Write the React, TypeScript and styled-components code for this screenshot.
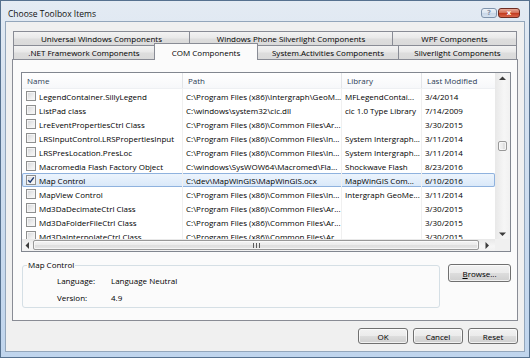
import styled, { createGlobalStyle } from "styled-components";

const GlobalStyle = createGlobalStyle`
  html, body {
    margin: 0;
    padding: 0;
    background: #ffffff;
  }
  body {
    font-family: "Open Sans", "Segoe UI", sans-serif;
    font-size: 8px;
    color: #000;
  }
  * {
    box-sizing: border-box;
  }
`;

const Window = styled.div`
  width: 530px;
  height: 358px;
  display: flex;
  flex-direction: column;
  border: 1px solid #56718f;
  background: linear-gradient(to bottom, #e4ebf3 0%, #d6e2f0 25%, #c0d5ed 100%);
`;

const TitleBar = styled.div`
  height: 20px;
  display: flex;
  align-items: flex-start;
  padding: 6px 9px 0 7px;
`;

const Title = styled.div`
  flex: 1;
  font-size: 8.5px;
  line-height: 13px;
  color: #111;
`;

const CaptionGroup = styled.div`
  display: flex;
  gap: 1px;
  margin-top: 1px;
`;

const CaptionButton = styled.div<{ $close?: boolean }>`
  width: ${(p) => (p.$close ? 22 : 16)}px;
  height: 10px;
  border-radius: 3px;
  display: flex;
  align-items: center;
  justify-content: center;
  font-family: "DejaVu Sans", sans-serif;
  font-weight: bold;
  font-size: 7px;
  line-height: 1;
  border: 1px solid ${(p) => (p.$close ? "#6e2d22" : "#7f93ab")};
  color: ${(p) => (p.$close ? "#ffffff" : "#8795a8")};
  background: ${(p) =>
    p.$close
      ? "linear-gradient(#e7a896 0%, #d36d55 48%, #c2391d 52%, #d9654a 100%)"
      : "linear-gradient(#eef3f9 0%, #dce6f1 48%, #c9d7e8 52%, #d6e2ef 100%)"};
`;

const Client = styled.div`
  flex: 1;
  margin: 0 4px 5px 4px;
  border: 1px solid #93a6bb;
  background: #f0f0f0;
  padding: 9px 6px 6px 6px;
  display: flex;
  flex-direction: column;
`;

const TabStrip = styled.div`
  display: flex;
  flex-direction: column;
  padding: 0 1px;
  position: relative;
  z-index: 1;
`;

const TabRow = styled.div`
  display: flex;
  height: 14px;
`;

const Tab = styled.div<{ $w: number; $active?: boolean }>`
  width: ${(p) => p.$w}px;
  flex: none;
  display: flex;
  align-items: center;
  justify-content: center;
  white-space: nowrap;
  border: 1px solid #898c95;
  border-bottom: none;
  margin-left: -1px;
  &:first-child {
    margin-left: 0;
  }
  ${(p) =>
    p.$active
      ? `
    height: 17px;
    margin-top: -2px;
    background: #fbfbfb;
    position: relative;
    z-index: 2;
  `
      : `
    height: 14px;
    background: linear-gradient(#f3f3f3 0%, #e9e9e9 45%, #dddddd 55%, #dadada 100%);
  `}
`;

const Panel = styled.div`
  height: 262px;
  border: 1px solid #898c95;
  background: #fbfbfb;
  padding: 12px 6px 12px 8px;
  display: flex;
  flex-direction: column;
  gap: 8px;
`;

const ListView = styled.div`
  height: 180px;
  border: 1px solid #828790;
  background: #ffffff;
  display: grid;
  grid-template-columns: 1fr 15px;
  grid-template-rows: 1fr 12px;
  overflow: hidden;
`;

const ListContent = styled.div`
  overflow: hidden;
  display: flex;
  flex-direction: column;
`;

const HeaderRow = styled.div`
  display: flex;
  height: 16px;
  flex: none;
  background: linear-gradient(#ffffff, #f7f8fa);
  border-bottom: 1px solid #eef0f3;
`;

const HeaderCell = styled.div<{ $w: number }>`
  width: ${(p) => p.$w}px;
  flex: none;
  display: flex;
  align-items: center;
  padding-left: 5px;
  color: #2b3b55;
  border-right: 1px solid #e3e5e8;
  white-space: nowrap;
  overflow: hidden;
`;

const Rows = styled.div`
  flex: 1;
  overflow: hidden;
`;

const Row = styled.div<{ $selected?: boolean }>`
  display: flex;
  height: 14px;
  ${(p) =>
    p.$selected &&
    `
    background: linear-gradient(#eef5fd, #d9e8f9);
    box-shadow: inset 0 0 0 1px #8fb2de;
    border-radius: 2px;
  `}
`;

const Cell = styled.div<{ $w: number }>`
  width: ${(p) => p.$w}px;
  flex: none;
  display: flex;
  align-items: center;
  gap: 3px;
  padding-left: 3px;
  border-right: 1px solid #f0f0f0;
  white-space: nowrap;
  overflow: hidden;
`;

const CheckBox = styled.span<{ $checked?: boolean }>`
  width: 10px;
  height: 10px;
  flex: none;
  margin-left: 1px;
  border: 1px solid #8e8f8f;
  background: linear-gradient(135deg, #d2d4d8 0%, #eeeeee 60%, #fafafa 100%);
  box-shadow: inset 0 0 0 1px #f4f4f4;
  display: flex;
  align-items: center;
  justify-content: center;
`;

const VScroll = styled.div`
  display: flex;
  flex-direction: column;
  background: linear-gradient(to right, #e8e8e8, #f6f6f6 60%, #f1f1f1);
`;

const HScroll = styled.div`
  display: flex;
  align-items: center;
  background: linear-gradient(#e8e8e8, #f6f6f6 60%, #f1f1f1);
`;

const Corner = styled.div`
  background: #f0f0f0;
`;

const Arrow = styled.div<{ $size: number }>`
  width: ${(p) => p.$size}px;
  height: ${(p) => p.$size}px;
  flex: none;
  display: flex;
  align-items: center;
  justify-content: center;
`;

const VTrack = styled.div`
  flex: 1;
  display: flex;
  flex-direction: column;
  align-items: center;
`;

const Thumb = styled.div<{ $vertical?: boolean }>`
  border: 1px solid #989898;
  border-radius: 2px;
  display: flex;
  align-items: center;
  justify-content: center;
  background: ${(p) =>
    p.$vertical
      ? "linear-gradient(to right, #f4f4f4 0%, #ebebeb 50%, #dedede 51%, #e6e6e6 100%)"
      : "linear-gradient(#f4f4f4 0%, #ebebeb 50%, #dedede 51%, #e6e6e6 100%)"};
  box-shadow: inset 0 0 0 1px rgba(255, 255, 255, 0.6);
`;

const VThumb = styled(Thumb)`
  width: 9px;
  height: 10px;
`;

const HThumb = styled(Thumb)`
  height: 10px;
  flex: 1;
  margin: 0 1px;
`;

const Grip = styled.span`
  width: 7px;
  height: 5px;
  background: repeating-linear-gradient(to right, #5c5c5c 0 1px, transparent 1px 3px);
`;

const GroupRow = styled.div`
  display: flex;
  align-items: flex-start;
  gap: 8px;
  padding-left: 1px;
`;

const GroupBox = styled.fieldset`
  flex: 1;
  min-width: 0;
  margin: 0;
  padding: 2px 4px 1px 4px;
  border: 1px solid #d5dfe5;
  border-radius: 3px;
`;

const GroupLegend = styled.legend`
  padding: 0 1px;
  line-height: 10px;
`;

const InfoGrid = styled.div`
  display: grid;
  grid-template-columns: 54px auto;
  grid-auto-rows: 17px;
  align-items: center;
  margin-left: 30px;
`;

const Button = styled.button`
  font: inherit;
  color: #000;
  width: 50px;
  height: 16px;
  padding: 0;
  border: 1px solid #707070;
  border-radius: 3px;
  background: linear-gradient(#f2f2f2 0%, #ebebeb 50%, #dddddd 51%, #cfcfcf 100%);
  box-shadow: inset 0 0 0 1px rgba(255, 255, 255, 0.7);
  display: flex;
  align-items: center;
  justify-content: center;
`;

const BrowseButton = styled(Button)`
  width: 63px;
  height: 18px;
  margin-top: 4px;
`;

const ButtonRow = styled.div`
  display: flex;
  justify-content: flex-end;
  gap: 5px;
  margin-top: 7px;
`;

const cols = [161, 159, 80, 100];

const rows = [
  { name: "LegendContainer.SillyLegend", path: "C:\\Program Files (x86)\\Intergraph\\GeoM...", lib: "MFLegendContai...", date: "3/4/2014" },
  { name: "ListPad class", path: "C:\\windows\\system32\\cic.dll", lib: "cic 1.0 Type Library", date: "7/14/2009" },
  { name: "LreEventPropertiesCtrl Class", path: "C:\\Program Files (x86)\\Common Files\\Ar...", lib: "", date: "3/30/2015" },
  { name: "LRSInputControl.LRSPropertiesInput", path: "C:\\Program Files (x86)\\Common Files\\In...", lib: "System Intergraph...", date: "3/11/2014" },
  { name: "LRSPresLocation.PresLoc", path: "C:\\Program Files (x86)\\Common Files\\In...", lib: "System Intergraph...", date: "3/11/2014" },
  { name: "Macromedia Flash Factory Object", path: "C:\\windows\\SysWOW64\\Macromed\\Fla...", lib: "Shockwave Flash", date: "8/23/2016" },
  { name: "Map Control", path: "C:\\dev\\MapWinGIS\\MapWinGIS.ocx", lib: "MapWinGIS Com...", date: "6/10/2016", checked: true },
  { name: "MapView Control", path: "C:\\Program Files (x86)\\Common Files\\In...", lib: "Intergraph GeoMe...", date: "3/11/2014" },
  { name: "Md3DaDecimateCtrl Class", path: "C:\\Program Files (x86)\\Common Files\\Ar...", lib: "", date: "3/30/2015" },
  { name: "Md3DaFolderFileCtrl Class", path: "C:\\Program Files (x86)\\Common Files\\Ar...", lib: "", date: "3/30/2015" },
  { name: "Md3DaInterpolateCtrl Class", path: "C:\\Program Files (x86)\\Common Files\\Ar...", lib: "", date: "3/30/2015" },
];

const ArrowIcon = ({ dir }: { dir: "up" | "down" | "left" | "right" }) => {
  const pts = {
    up: "0,4 3.5,0.5 7,4",
    down: "0,0.5 3.5,4 7,0.5",
    left: "4,0 0.5,3.5 4,7",
    right: "0.5,0 4,3.5 0.5,7",
  }[dir];
  const vertical = dir === "up" || dir === "down";
  return (
    <svg width={vertical ? 7 : 5} height={vertical ? 5 : 7} viewBox={vertical ? "0 0 7 5" : "0 0 5 7"}>
      <polygon points={pts} fill="#3c3c3c" />
    </svg>
  );
};

const Check = () => (
  <svg width="8" height="8" viewBox="0 0 8 8">
    <path d="M1.2 4.2 L3.2 6.2 L6.8 1.4" stroke="#1c3a72" strokeWidth="1.4" fill="none" />
  </svg>
);

const App: React.FC = () => {
  return (
    <>
      <GlobalStyle />
      <Window>
        <TitleBar>
          <Title>Choose Toolbox Items</Title>
          <CaptionGroup>
            <CaptionButton>?</CaptionButton>
            <CaptionButton $close>x</CaptionButton>
          </CaptionGroup>
        </TitleBar>
        <Client>
          <TabStrip>
            <TabRow>
              <Tab $w={177}>Universal Windows Components</Tab>
              <Tab $w={204}>Windows Phone Silverlight Components</Tab>
              <Tab $w={125}>WPF Components</Tab>
            </TabRow>
            <TabRow>
              <Tab $w={142}>.NET Framework Components</Tab>
              <Tab $w={104} $active>
                COM Components
              </Tab>
              <Tab $w={142}>System.Activities Components</Tab>
              <Tab $w={119}>Silverlight Components</Tab>
            </TabRow>
          </TabStrip>
          <Panel>
            <ListView>
              <ListContent>
                <HeaderRow>
                  <HeaderCell $w={cols[0]}>Name</HeaderCell>
                  <HeaderCell $w={cols[1]}>Path</HeaderCell>
                  <HeaderCell $w={cols[2]}>Library</HeaderCell>
                  <HeaderCell $w={cols[3]}>Last Modified</HeaderCell>
                </HeaderRow>
                <Rows>
                  {rows.map((r) => (
                    <Row key={r.name} $selected={r.checked}>
                      <Cell $w={cols[0]}>
                        <CheckBox $checked={r.checked}>{r.checked && <Check />}</CheckBox>
                        {r.name}
                      </Cell>
                      <Cell $w={cols[1]}>{r.path}</Cell>
                      <Cell $w={cols[2]}>{r.lib}</Cell>
                      <Cell $w={cols[3]}>{r.date}</Cell>
                    </Row>
                  ))}
                </Rows>
              </ListContent>
              <VScroll>
                <Arrow $size={10} style={{ width: 15 }}>
                  <ArrowIcon dir="up" />
                </Arrow>
                <VTrack>
                  <VThumb $vertical style={{ marginTop: 58 }} />
                </VTrack>
                <Arrow $size={10} style={{ width: 15 }}>
                  <ArrowIcon dir="down" />
                </Arrow>
              </VScroll>
              <HScroll>
                <Arrow $size={10}>
                  <ArrowIcon dir="left" />
                </Arrow>
                <HThumb>
                  <Grip />
                </HThumb>
                <Arrow $size={15}>
                  <ArrowIcon dir="right" />
                </Arrow>
              </HScroll>
              <Corner />
            </ListView>
            <GroupRow>
              <GroupBox>
                <GroupLegend>Map Control</GroupLegend>
                <InfoGrid>
                  <span>Language:</span>
                  <span>Language Neutral</span>
                  <span>Version:</span>
                  <span>4.9</span>
                </InfoGrid>
              </GroupBox>
              <BrowseButton>
                <span>
                  <u>B</u>rowse...
                </span>
              </BrowseButton>
            </GroupRow>
          </Panel>
          <ButtonRow>
            <Button>OK</Button>
            <Button>Cancel</Button>
            <Button>Reset</Button>
          </ButtonRow>
        </Client>
      </Window>
    </>
  );
};

export default App;
